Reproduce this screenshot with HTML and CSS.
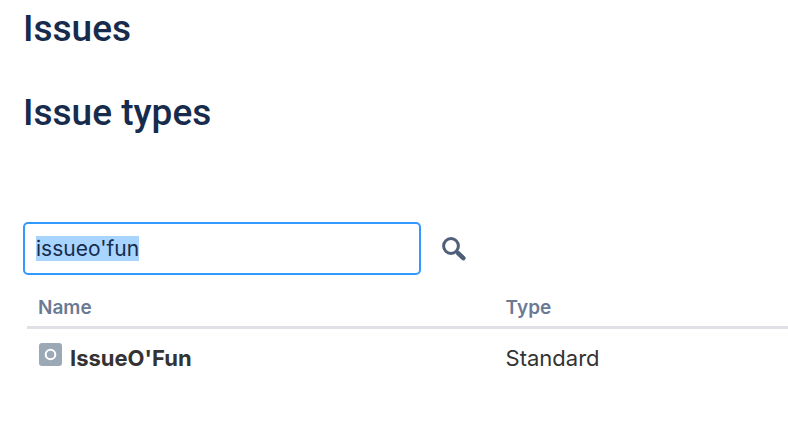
FILE: index.html
```html
<!DOCTYPE html>
<html lang="en">
<head>
    <meta charset="utf-8">
    <title>Issue types</title>
    <link rel="stylesheet" href="styles.css">
</head>
<body>
<div class="container">
    <h1>Issues</h1>
    <h2>Issue types</h2>
    <form class="search-container">
        <input type="text" id="search-input" class="search-input" aria-label="Search issue types" value="issueo'fun" autocomplete="off" spellcheck="false">
        <button type="submit" class="search-button" aria-label="Search">
            <svg width="26" height="26" viewBox="0 0 26 26" fill="none" stroke="#505f79" aria-hidden="true">
                <circle cx="10" cy="10" r="7.4" stroke-width="3"/>
                <path d="M15.5 15.5L17.5 17.5" stroke-width="3"/>
                <path d="M17.3 17.3L22.3 22.1" stroke-width="4.6" stroke-linecap="round"/>
            </svg>
        </button>
    </form>
    <table class="issue-table">
        <thead>
            <tr>
                <th class="name-column">Name</th>
                <th>Type</th>
            </tr>
        </thead>
        <tbody>
            <tr>
                <td>
                    <div class="issue-name">
                        <svg class="issue-icon" width="23" height="23" viewBox="0 0 23 23" aria-hidden="true">
                            <rect width="23" height="23" rx="3" fill="#9ba9b7"/>
                            <circle cx="11.5" cy="11.5" r="4.8" fill="none" stroke="#fff" stroke-width="2"/>
                        </svg>
                        <strong>IssueO'Fun</strong>
                    </div>
                </td>
                <td>Standard</td>
            </tr>
        </tbody>
    </table>
</div>

<script>
    var searchInput = document.getElementById("search-input");
    searchInput.focus();
    searchInput.select();
</script>
</body>
</html>
```

FILE: styles.css
```css
body {
    font-family: Inter, "Liberation Sans", sans-serif;
    font-size: 22px;
    margin: 0;
    background-color: #fff;
    color: #333;
}

.container {
    padding: 8px 0 24px 23px;
}

h1,
h2 {
    margin: 0;
    font-family: Roboto, Inter, sans-serif;
    font-size: 37px;
    line-height: 42px;
    font-weight: 500;
    color: #172b4d;
}

h2 {
    margin-top: 42px;
}

.search-container {
    display: flex;
    align-items: center;
    gap: 20px;
    margin-top: 88px;
}

.search-input {
    box-sizing: border-box;
    width: 52%;
    height: 53px;
    padding: 0 11px;
    border: 2px solid #3399ff;
    border-radius: 5px;
    outline: none;
    font-family: inherit;
    font-size: 21px;
    color: #172b4d;
}

.search-input::selection {
    background-color: #a8d5ff;
    color: #172b4d;
}

.search-button {
    display: flex;
    padding: 0;
    border: none;
    background: none;
    cursor: pointer;
}

.issue-table {
    width: calc(100% - 4px);
    margin: 12px 0 0 4px;
    border-collapse: collapse;
    table-layout: fixed;
}

th {
    padding: 8px 0 6px 11px;
    border-bottom: 3px solid #dfe1e6;
    font-size: 19px;
    line-height: 25px;
    font-weight: 600;
    text-align: left;
    color: #6b7a94;
}

.name-column {
    width: 60%;
}

td {
    padding: 14px 0 14px 11px;
    line-height: 30px;
}

.issue-name {
    display: flex;
    align-items: flex-start;
    gap: 8px;
    padding-left: 1px;
}
```
